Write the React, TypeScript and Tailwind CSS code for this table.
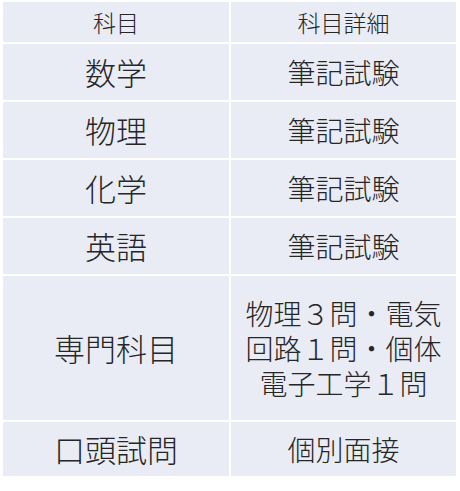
import React from "react";

const rows: { a: string; b: string[]; h: string }[] = [
  { a: "数学", b: ["筆記試験"], h: "h-[56px]" },
  { a: "物理", b: ["筆記試験"], h: "h-[56px]" },
  { a: "化学", b: ["筆記試験"], h: "h-[56px]" },
  { a: "英語", b: ["筆記試験"], h: "h-[56px]" },
  { a: "専門科目", b: ["物理３問・電気", "回路１問・個体", "電子工学１問"], h: "h-[144px]" },
  { a: "口頭試問", b: ["個別面接"], h: "h-[54px]" },
];

export default function App() {
  return (
    <div
      className="w-[460px] h-[491px] bg-white pt-[2px] pl-[3px] text-[#262626]"
      style={{ fontFamily: '"Noto Sans CJK JP", "Noto Sans", sans-serif' }}
    >
      <div className="grid grid-cols-[226px_225px] gap-x-[2px] gap-y-[2px]">
        <div className="h-[40px] bg-[#e9ecf5] flex items-center justify-center text-[23px] font-light">
          科目
        </div>
        <div className="h-[40px] bg-[#e9ecf5] flex items-center justify-center text-[23px] font-light">
          科目詳細
        </div>
        {rows.map((r) => (
          <React.Fragment key={r.a}>
            <div className={`${r.h} bg-[#e9ecf5] flex items-center justify-center text-[31px] font-light`}>
              {r.a}
            </div>
            <div className={`${r.h} bg-[#e9ecf5] flex flex-col items-center justify-center text-[28px] leading-[35px] font-light`}>
              {r.b.map((l) => (
                <div key={l}>{l}</div>
              ))}
            </div>
          </React.Fragment>
        ))}
      </div>
    </div>
  );
}
